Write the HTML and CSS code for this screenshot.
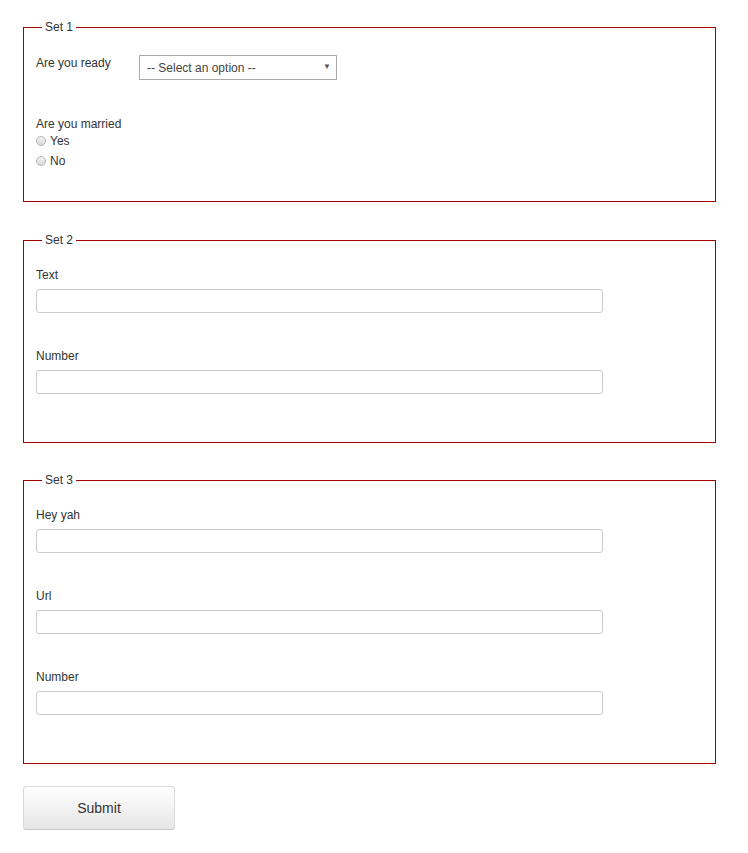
FILE: index.html
```html
<!DOCTYPE html>
<html lang="en">
<head>
<meta charset="utf-8">
<title>Form</title>
<link rel="stylesheet" href="styles.css">
</head>
<body>
<form class="page">
  <fieldset class="set set-first">
    <legend class="set-title">Set 1</legend>
    <div class="row-inline">
      <label class="label-inline" for="ready">Are you ready</label>
      <div class="select-wrap">
        <select id="ready" class="select">
          <option>-- Select an option --</option>
          <option>Yes</option>
          <option>No</option>
        </select>
      </div>
    </div>
    <div class="field-radio">
      <div class="label">Are you married</div>
      <label class="radio-opt"><input type="radio" name="married" class="radio">Yes</label>
      <label class="radio-opt"><input type="radio" name="married" class="radio">No</label>
    </div>
  </fieldset>

  <fieldset class="set">
    <legend class="set-title">Set 2</legend>
    <div class="field">
      <label class="label" for="t1">Text</label>
      <input id="t1" type="text" class="input">
    </div>
    <div class="field">
      <label class="label" for="n1">Number</label>
      <input id="n1" type="number" class="input">
    </div>
  </fieldset>

  <fieldset class="set">
    <legend class="set-title">Set 3</legend>
    <div class="field">
      <label class="label" for="h1">Hey yah</label>
      <input id="h1" type="text" class="input">
    </div>
    <div class="field">
      <label class="label" for="u1">Url</label>
      <input id="u1" type="url" class="input">
    </div>
    <div class="field">
      <label class="label" for="n2">Number</label>
      <input id="n2" type="number" class="input">
    </div>
  </fieldset>

  <button type="button" class="submit">Submit</button>
</form>
</body>
</html>
```

FILE: styles.css
```css
html, body {
  margin: 0;
  padding: 0;
  background: #fff;
}

body {
  font-family: "Liberation Sans", Arial, sans-serif;
  font-size: 12px;
  color: #333;
}

.page {
  padding: 20px 0 0 23px;
  width: 693px;
}

.set {
  margin: 0 0 30px 0;
  padding: 21px 12px 12px 12px;
  border: 1px solid #a30000;
  min-width: 0;
}

.set-first {
  margin-bottom: 31px;
}

.set-title {
  margin-left: 6px;
  padding: 0 3px;
  line-height: 14px;
  font-size: 12px;
  color: #333;
}

.row-inline {
  display: flex;
  align-items: flex-start;
  margin-bottom: 37px;
}

.label-inline {
  width: 103px;
  line-height: 14px;
  padding-top: 1px;
}

.select-wrap {
  position: relative;
  width: 198px;
}

.select {
  appearance: none;
  -webkit-appearance: none;
  display: block;
  width: 198px;
  height: 25px;
  margin: 0;
  padding: 0 20px 0 7px;
  border: 1px solid #aaa;
  border-radius: 0;
  background: #fff;
  font-family: "Liberation Sans", Arial, sans-serif;
  font-size: 12px;
  color: #444;
}

.select-wrap::after {
  content: "\25BC";
  position: absolute;
  right: 6px;
  top: 8px;
  font-size: 8px;
  line-height: 8px;
  color: #555;
  pointer-events: none;
}

.label {
  display: block;
  line-height: 14px;
}

.field-radio {
  margin-bottom: 18px;
}

.radio-opt {
  display: flex;
  align-items: center;
  height: 20px;
  line-height: 20px;
}

.radio {
  appearance: none;
  -webkit-appearance: none;
  width: 10px;
  height: 10px;
  margin: 0 4px 0 0;
  border: 1px solid #b5b5b5;
  border-radius: 50%;
  background: linear-gradient(#f4f4f4, #d8d8d8);
  box-sizing: border-box;
}

.field {
  margin-bottom: 36px;
}

.field .label {
  margin-bottom: 7px;
}

.input {
  display: block;
  box-sizing: border-box;
  width: 567px;
  height: 24px;
  margin: 0;
  padding: 0 6px;
  border: 1px solid #ccc;
  border-radius: 3px;
  background: #fff;
  font-family: "Liberation Sans", Arial, sans-serif;
  font-size: 12px;
}

.submit {
  display: block;
  margin-top: -8px;
  width: 152px;
  height: 44px;
  border: 1px solid #dcdcdc;
  border-bottom-color: #c8c8c8;
  border-radius: 3px;
  background: linear-gradient(#ffffff, #e6e6e6);
  box-shadow: 0 1px 1px rgba(0,0,0,0.08);
  font-family: "Liberation Sans", Arial, sans-serif;
  font-size: 14px;
  color: #333;
  padding: 0;
}
```
